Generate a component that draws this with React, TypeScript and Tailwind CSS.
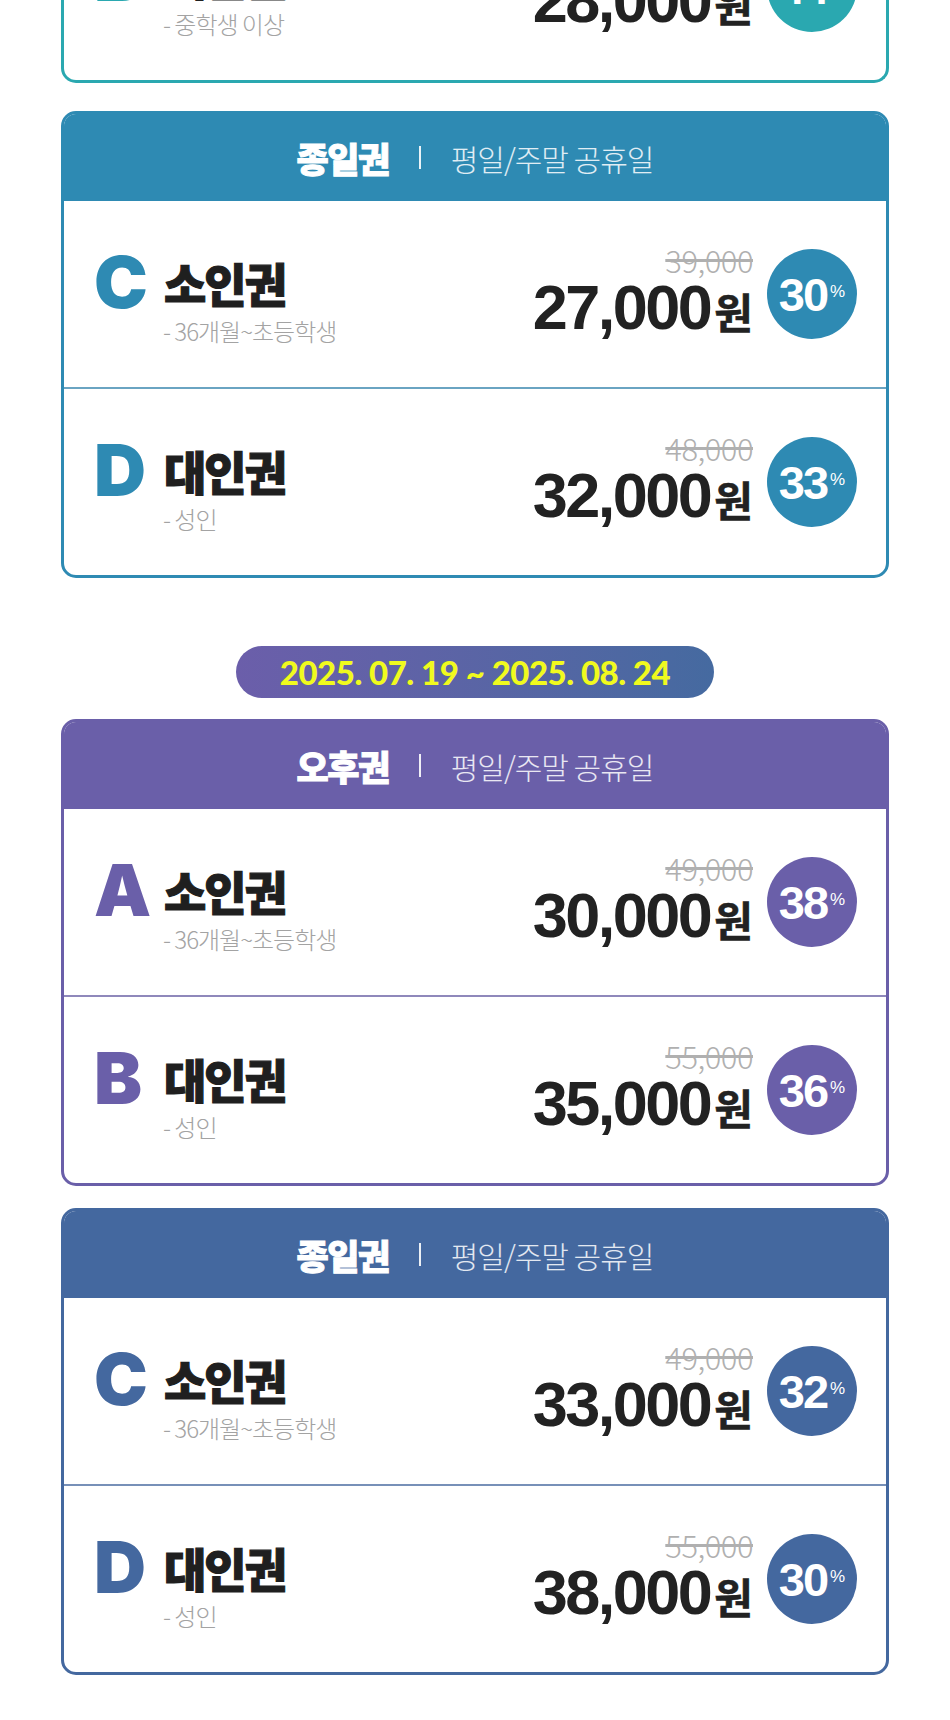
type Ticket = {
  letter: string;
  title: string;
  sub: string;
  orig: string;
  price: string;
  pct: string;
};

type Theme = {
  border: string;
  header: string;
  text: string;
  badge: string;
  divider: string;
};

const teal: Theme = {
  border: "border-[#2aa8b0]",
  header: "bg-[#2aa8b0]",
  text: "text-[#2aa8b0]",
  badge: "bg-[#2aa8b0]",
  divider: "border-[#6cbcc2]",
};

const ocean: Theme = {
  border: "border-[#2e8ab3]",
  header: "bg-[#2e8ab3]",
  text: "text-[#2e8ab3]",
  badge: "bg-[#2e8ab3]",
  divider: "border-[#6aa4c2]",
};

const violet: Theme = {
  border: "border-[#6a5fa9]",
  header: "bg-[#6a5fa9]",
  text: "text-[#6a5fa9]",
  badge: "bg-[#6a5fa9]",
  divider: "border-[#8f88bb]",
};

const navy: Theme = {
  border: "border-[#44689f]",
  header: "bg-[#44689f]",
  text: "text-[#44689f]",
  badge: "bg-[#44689f]",
  divider: "border-[#7790b8]",
};

const kr = "font-['Noto_Sans_CJK_KR','Noto_Sans',sans-serif]";
const num = "font-['Liberation_Sans','Noto_Sans_CJK_KR',sans-serif]";

function TicketRow({ t, theme, last }: { t: Ticket; theme: Theme; last?: boolean }) {
  return (
    <div
      className={
        "flex items-center justify-between pl-[30px] pr-[29px] " +
        (last ? "h-[186px]" : "h-[188px] border-b-2 " + theme.divider)
      }
    >
      <div className="flex flex-col">
        <div className="flex items-center">
          <span
            className={
              "w-[70px] font-['Inter',sans-serif] text-[72px] font-black leading-none tracking-[-2px] " +
              theme.text
            }
          >
            {t.letter}
          </span>
          <span
            className={
              kr +
              " text-[46px] font-black leading-none text-[#1f1f1f] tracking-[-2px] [-webkit-text-stroke:1.2px_#1f1f1f]"
            }
          >
            {t.title}
          </span>
        </div>
        <span className={kr + " ml-[69px] mt-[1px] text-[24px] font-light leading-none text-[#a3a3a3] tracking-[-1px]"}>
          {t.sub}
        </span>
      </div>

      <div className="flex items-center gap-[14px]">
        <div className="flex flex-col items-end mb-[5px]">
          <span className={kr + " text-[31px] font-light leading-none text-[#b0b0b0] line-through tracking-[-0.5px]"}>
            {t.orig}
          </span>
          <div className="flex items-baseline mt-[1px]">
            <span className={num + " text-[63px] font-bold leading-none text-[#222] tracking-[-2.5px]"}>
              {t.price}
            </span>
            <span
              className={
                kr + " text-[42px] font-bold leading-none text-[#222] ml-[4px] [-webkit-text-stroke:0.6px_#222]"
              }
            >
              원
            </span>
          </div>
        </div>
        <div
          className={
            "w-[90px] h-[90px] rounded-full flex items-center justify-center text-white " + theme.badge
          }
        >
          <span className={num + " text-[47px] font-bold leading-none tracking-[-2px]"}>{t.pct}</span>
          <span className={num + " text-[17px] leading-none -mt-[6px] ml-[3px]"}>%</span>
        </div>
      </div>
    </div>
  );
}

function PriceCard({
  name,
  theme,
  tickets,
}: {
  name: string;
  theme: Theme;
  tickets: Ticket[];
}) {
  return (
    <div className={"border-[3px] rounded-[15px] overflow-hidden bg-white " + theme.border}>
      <div className={"h-[87px] flex items-center justify-center gap-[30px] text-white " + theme.header}>
        <span
          className={kr + " text-[35px] font-black leading-none tracking-[-1.5px] [-webkit-text-stroke:1px_#ffffff]"}
        >
          {name}
        </span>
        <span className="w-[2px] h-[23px] bg-white/90" />
        <span className={kr + " text-[30px] font-light leading-none text-white/85 tracking-[-1px]"}>
          평일/주말 공휴일
        </span>
      </div>
      {tickets.map((t, i) => (
        <TicketRow key={t.letter} t={t} theme={theme} last={i === tickets.length - 1} />
      ))}
    </div>
  );
}

export default function App() {
  return (
    <div className="w-full min-h-[1720px] bg-white px-[61px] pb-[45px] flex flex-col">
      {/* tail of the card above the fold */}
      <div className={"h-[83px] overflow-hidden border-x-[3px] border-b-[3px] rounded-b-[15px] " + teal.border}>
        <div className="-mt-[106px]">
          <TicketRow
            t={{ letter: "B", title: "대인권", sub: "- 중학생 이상", orig: "50,000", price: "28,000", pct: "44" }}
            theme={teal}
            last
          />
        </div>
      </div>

      <div className="mt-[28px]">
        <PriceCard
          name="종일권"
          theme={ocean}
          tickets={[
            { letter: "C", title: "소인권", sub: "- 36개월~초등학생", orig: "39,000", price: "27,000", pct: "30" },
            { letter: "D", title: "대인권", sub: "- 성인", orig: "48,000", price: "32,000", pct: "33" },
          ]}
        />
      </div>

      <div className="mt-[68px] self-center w-[478px] h-[52px] rounded-full bg-gradient-to-r from-[#6b5eaa] to-[#456aa0] flex items-center justify-center">
        <span className="font-['Lato',sans-serif] text-[33px] font-black leading-none text-[#f0fa1e] tracking-[-0.5px]">
          2025. 07. 19 ~ 2025. 08. 24
        </span>
      </div>

      <div className="mt-[21px]">
        <PriceCard
          name="오후권"
          theme={violet}
          tickets={[
            { letter: "A", title: "소인권", sub: "- 36개월~초등학생", orig: "49,000", price: "30,000", pct: "38" },
            { letter: "B", title: "대인권", sub: "- 성인", orig: "55,000", price: "35,000", pct: "36" },
          ]}
        />
      </div>

      <div className="mt-[22px]">
        <PriceCard
          name="종일권"
          theme={navy}
          tickets={[
            { letter: "C", title: "소인권", sub: "- 36개월~초등학생", orig: "49,000", price: "33,000", pct: "32" },
            { letter: "D", title: "대인권", sub: "- 성인", orig: "55,000", price: "38,000", pct: "30" },
          ]}
        />
      </div>
    </div>
  );
}
